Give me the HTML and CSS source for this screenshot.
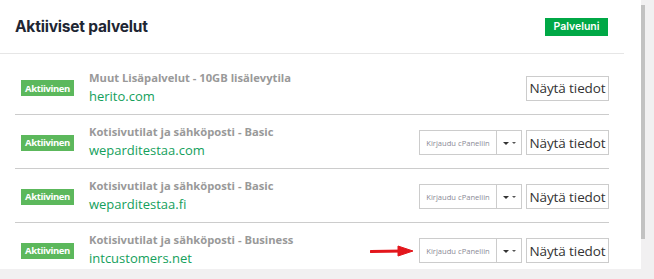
FILE: index.html
```html
<!DOCTYPE html>
<html lang="fi">
<head>
<meta charset="utf-8">
<title>Aktiiviset palvelut</title>
<link rel="stylesheet" href="styles.css">
</head>
<body>
<div class="screen">
  <div class="content">
    <div class="panel">
      <div class="panel-head">
        <h3 class="panel-title">Aktiiviset palvelut</h3>
        <a class="btn-mine" href="#">Palveluni</a>
      </div>
      <div class="list">
        <div class="row">
          <span class="badge">Aktiivinen</span>
          <div class="info">
            <div class="product">Muut Lisäpalvelut - 10GB lisälevytila</div>
            <a class="domain" href="#">herito.com</a>
          </div>
          <div class="actions">
            <a class="btn-details" href="#">Näytä tiedot</a>
          </div>
        </div>
        <div class="row">
          <span class="badge">Aktiivinen</span>
          <div class="info">
            <div class="product">Kotisivutilat ja sähköposti - Basic</div>
            <a class="domain" href="#">weparditestaa.com</a>
          </div>
          <div class="actions">
            <div class="split">
              <a class="btn-login" href="#">Kirjaudu cPaneliin</a>
              <span class="btn-caret"><i class="caret big"></i><i class="caret small"></i></span>
            </div>
            <a class="btn-details" href="#">Näytä tiedot</a>
          </div>
        </div>
        <div class="row">
          <span class="badge">Aktiivinen</span>
          <div class="info">
            <div class="product">Kotisivutilat ja sähköposti - Basic</div>
            <a class="domain" href="#">weparditestaa.fi</a>
          </div>
          <div class="actions">
            <div class="split">
              <a class="btn-login" href="#">Kirjaudu cPaneliin</a>
              <span class="btn-caret"><i class="caret big"></i><i class="caret small"></i></span>
            </div>
            <a class="btn-details" href="#">Näytä tiedot</a>
          </div>
        </div>
        <div class="row">
          <span class="badge">Aktiivinen</span>
          <div class="info">
            <div class="product">Kotisivutilat ja sähköposti - Business</div>
            <a class="domain" href="#">intcustomers.net</a>
          </div>
          <div class="actions">
            <svg class="arrow" width="44" height="12" viewBox="0 0 44 12" aria-hidden="true">
              <path d="M1 6.5 L34 6" stroke="#e3161c" stroke-width="3.2" stroke-linecap="round" fill="none"/>
              <path d="M28 1 L43 6 L28 11 Z" fill="#e3161c" stroke="#e3161c" stroke-width="1" stroke-linejoin="round"/>
            </svg>
            <div class="split">
              <a class="btn-login" href="#">Kirjaudu cPaneliin</a>
              <span class="btn-caret"><i class="caret big"></i><i class="caret small"></i></span>
            </div>
            <a class="btn-details" href="#">Näytä tiedot</a>
          </div>
        </div>
      </div>
    </div>
  </div>
  <div class="gutter"><div class="thumb"></div></div>
</div>
</body>
</html>
```

FILE: styles.css
```css
* { box-sizing: border-box; }
html, body { margin: 0; padding: 0; }
body {
  background: #f1f0f1;
  font-family: "Open Sans", "Liberation Sans", sans-serif;
  width: 654px;
  height: 279px;
  overflow: hidden;
}
a { text-decoration: none; }

.screen { display: flex; height: 279px; }
.content {
  width: 641px;
  height: 269px;
  background: #fff;
  overflow: hidden;
}
.gutter { width: 13px; padding-top: 5px; }
.thumb { width: 4px; height: 234px; background: #c2c2c2; }

.panel { width: 624px; }
.panel-head {
  height: 54px;
  border-bottom: 1px solid #e6e6e6;
  display: flex;
  align-items: center;
  justify-content: space-between;
  padding: 0 16px 0 15px;
}
.panel-title {
  margin: 0;
  font-family: Inter, "Open Sans", sans-serif;
  font-weight: 700;
  font-size: 15.5px;
  color: #1e2633;
  letter-spacing: -0.2px;
}
.btn-mine {
  display: inline-flex;
  align-items: center;
  justify-content: center;
  width: 63px;
  height: 18px;
  background: #00a846;
  color: #fff;
  font-family: Inter, "Open Sans", sans-serif;
  font-weight: 600;
  font-size: 10.5px;
}

.list { padding: 6px 15px 0 15px; }
.row {
  display: flex;
  align-items: center;
  height: 54px;
  border-top: 1px solid #cccccc;
  padding-left: 6px;
}
.row:first-child { border-top: none; }
.badge {
  width: 53px;
  height: 16px;
  background: #5cb85c;
  color: #fff;
  font-weight: 700;
  font-size: 9.5px;
  letter-spacing: -0.4px;
  display: inline-flex;
  align-items: center;
  justify-content: center;
  margin-right: 15px;
  margin-top: 2px;
}
.info { flex: 1; display: flex; flex-direction: column; padding-top: 1px; }
.product {
  font-weight: 700;
  font-size: 11.2px;
  color: #999999;
  line-height: 15px;
}
.domain {
  font-size: 13px;
  color: #14a05c;
  line-height: 20px;
  margin-top: 1px;
}
.actions {
  display: flex;
  align-items: center;
  gap: 4px;
  margin-top: 2px;
}
.btn-details {
  display: inline-flex;
  align-items: center;
  justify-content: center;
  width: 83px;
  height: 25px;
  border: 1px solid #cccccc;
  color: #333;
  font-size: 13.5px;
  letter-spacing: -0.1px;
}
.split { display: flex; height: 25px; }
.btn-login {
  display: inline-flex;
  align-items: center;
  justify-content: center;
  width: 78px;
  height: 25px;
  border: 1px solid #cccccc;
  color: #8a8a96;
  font-size: 7.6px;
}
.btn-caret {
  display: inline-flex;
  align-items: center;
  justify-content: center;
  gap: 3px;
  width: 25px;
  height: 25px;
  border: 1px solid #cccccc;
  border-left: none;
  padding-top: 1px;
}
.caret { display: block; width: 0; height: 0; }
.caret.big {
  border-left: 3px solid transparent;
  border-right: 3px solid transparent;
  border-top: 3px solid #333;
}
.caret.small {
  border-left: 2px solid transparent;
  border-right: 2px solid transparent;
  border-top: 2px solid #555;
  margin-top: -1px;
}
.arrow { margin-right: 1px; }
```
